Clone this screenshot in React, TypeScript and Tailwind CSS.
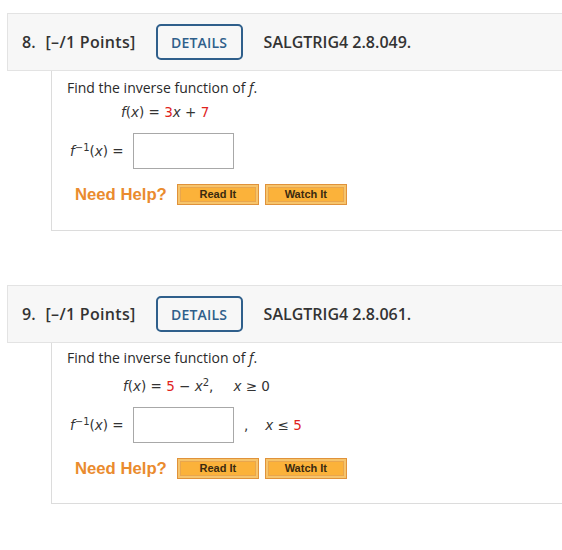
import React from 'react'

const sans = { fontFamily: '"Open Sans", "Liberation Sans", sans-serif' }
const math = { fontFamily: '"DejaVu Sans", Verdana, sans-serif' }
const arial = { fontFamily: '"Liberation Sans", Arial, sans-serif' }

function Header({ num, code }: { num: number; code: string }) {
  return (
    <div
      className="h-[58px] border border-r-0 border-[#e3e3e3] bg-[#f7f7f7] flex items-center pl-[14px] text-[16px] font-semibold text-[#333]"
      style={sans}
    >
      <span>{num}.</span>
      <span className="ml-[10px] tracking-[0.3px]">[–/1 Points]</span>
      <div className="ml-[20px] w-[87px] h-[36px] border-2 border-[#2f5f8b] rounded-[5px] flex items-center justify-center text-[#2f5f8b] text-[14px] font-semibold tracking-[0.2px]">
        DETAILS
      </div>
      <span className="ml-[21px]">{code}</span>
    </div>
  )
}

function HelpButton({ label }: { label: string }) {
  return (
    <div className="w-[82px] h-[21px] border border-[#e0923a] bg-[#f6c46c] p-[2px]">
      <div
        className="h-full border border-[#e9a64d] bg-[#fbb23a] flex items-center justify-center text-[11px] font-bold text-[#3a2a10]"
        style={arial}
      >
        {label}
      </div>
    </div>
  )
}

function NeedHelp() {
  return (
    <div className="flex items-center h-[21px]">
      <span className="text-[16.7px] font-bold text-[#ea8b2e] ml-[8px]" style={arial}>
        Need Help?
      </span>
      <div className="ml-[10px]">
        <HelpButton label="Read It" />
      </div>
      <div className="ml-[6px]">
        <HelpButton label="Watch It" />
      </div>
    </div>
  )
}

function Inverse({ tail }: { tail?: React.ReactNode }) {
  return (
    <div className="flex items-center text-[13.5px] text-[#333]" style={math}>
      <span className="ml-[3px] w-[63px]">
        <i>f</i>
        <sup className="text-[10px]">−1</sup>(<i>x</i>) =
      </span>
      <div className="w-[101px] h-[36px] border border-[#a8a8a8] bg-white" />
      {tail}
    </div>
  )
}

function Red({ children }: { children: React.ReactNode }) {
  return <span className="text-[#e0231c]">{children}</span>
}

export default function App() {
  return (
    <div className="w-[562px] h-[550px] bg-white overflow-hidden pt-[13px] pl-[7px] text-[#333]">
      <Header num={8} code="SALGTRIG4 2.8.049." />
      <div className="ml-[44px] h-[160px] border-l border-b border-[#dcdcdc] pl-[15px] pt-[7px]">
        <div className="text-[14px] leading-[20px] text-[#2a2a2a]" style={sans}>
          Find the inverse function of <i>f</i>.
        </div>
        <div className="mt-[4px] ml-[54px] text-[13.5px] leading-[20px]" style={math}>
          <i>f</i>(<i>x</i>) = <Red>3</Red>
          <i>x</i> + <Red>7</Red>
        </div>
        <div className="mt-[11px]">
          <Inverse />
        </div>
        <div className="mt-[15px]">
          <NeedHelp />
        </div>
      </div>

      <div className="mt-[54px]">
        <Header num={9} code="SALGTRIG4 2.8.061." />
      </div>
      <div className="ml-[44px] h-[161px] border-l border-b border-[#dcdcdc] pl-[15px] pt-[5px]">
        <div className="text-[14px] leading-[20px] text-[#2a2a2a]" style={sans}>
          Find the inverse function of <i>f</i>.
        </div>
        <div className="mt-[8px] ml-[56px] text-[13.5px] leading-[20px]" style={math}>
          <i>f</i>(<i>x</i>) = <Red>5</Red> − <i>x</i>
          <sup className="text-[10px]">2</sup>,<span className="inline-block w-[20px]" />
          <i>x</i> ≥ 0
        </div>
        <div className="mt-[11px]">
          <Inverse
            tail={
              <>
                <span className="ml-[10px]">,</span>
                <span className="ml-[17px]">
                  <i>x</i> ≤ <Red>5</Red>
                </span>
              </>
            }
          />
        </div>
        <div className="mt-[15px]">
          <NeedHelp />
        </div>
      </div>
    </div>
  )
}
